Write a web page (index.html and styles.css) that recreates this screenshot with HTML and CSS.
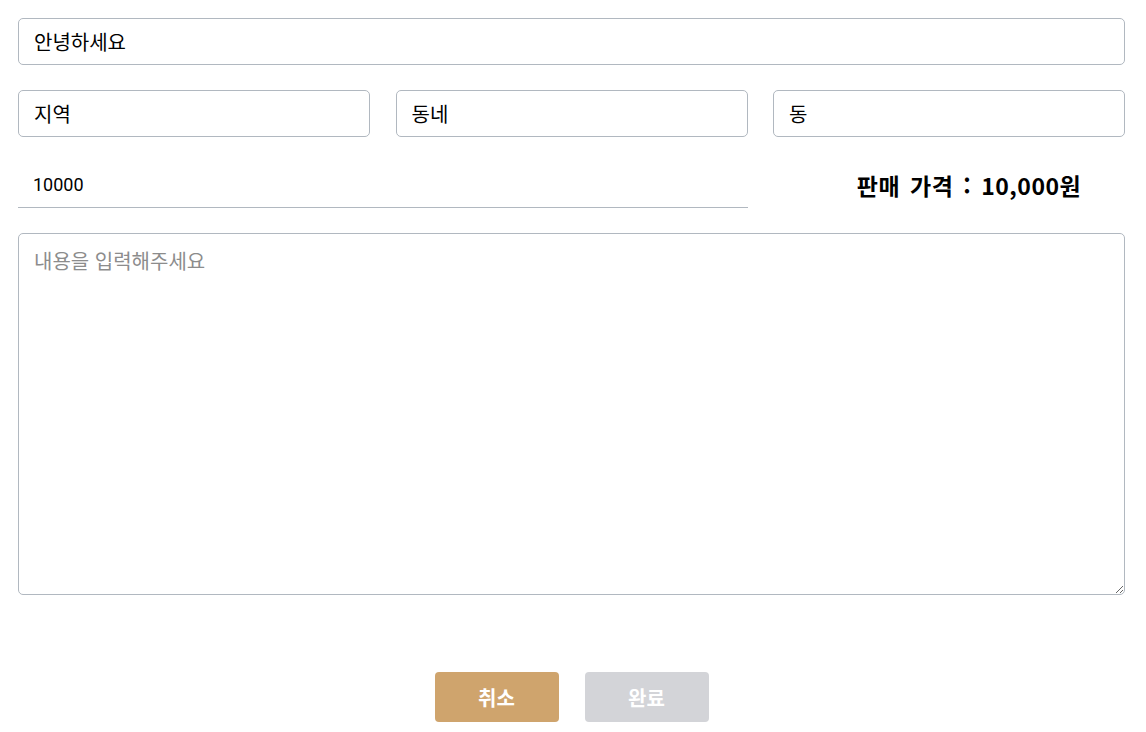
FILE: index.html
```html
<!DOCTYPE html>
<html lang="ko">
<head>
<meta charset="utf-8">
<title>글쓰기</title>
<link rel="stylesheet" href="styles.css">
</head>
<body>
<form class="write-form">
  <input class="field" type="text" value="안녕하세요">
  <div class="row-3">
    <input class="field" type="text" value="지역">
    <input class="field" type="text" value="동네">
    <input class="field" type="text" value="동">
  </div>
  <div class="row-3">
    <input class="field price-input" type="text" value="10000">
    <div class="price-label">판매 가격 : 10,000원</div>
  </div>
  <textarea class="field content" placeholder="내용을 입력해주세요"></textarea>
  <div class="actions">
    <button type="button" class="btn btn-cancel">취소</button>
    <button type="button" class="btn btn-done">완료</button>
  </div>
</form>
</body>
</html>
```

FILE: styles.css
```css
* { box-sizing: border-box; }
html, body { margin: 0; padding: 0; background: #fff; }
body {
  font-family: "Noto Sans CJK KR", "Noto Sans", sans-serif;
  color: #000;
}
.write-form {
  padding: 18px 21px 0 18px;
  display: flex;
  flex-direction: column;
  gap: 25px;
}
.field {
  display: block;
  width: 100%;
  height: 47px;
  border: 1px solid #b1b8c0;
  border-radius: 5px;
  padding: 0 15px;
  font-family: "Noto Sans CJK KR", "Noto Sans", sans-serif;
  font-size: 20px;
  color: #000;
  background: #fff;
  outline: none;
}
.row-3 {
  display: grid;
  grid-template-columns: repeat(3, 1fr);
  column-gap: 25.5px;
}
.price-input {
  grid-column: span 2;
  height: 46px;
  border: none;
  border-bottom: 1px solid #b1b8c0;
  border-radius: 0;
  font-family: Roboto, "Liberation Sans", sans-serif;
  font-size: 18px;
}
.price-label {
  display: flex;
  align-items: center;
  justify-content: center;
  padding-left: 40px;
  font-size: 23px;
  font-weight: 700;
  letter-spacing: 0.5px;
  word-spacing: 3px;
}
.content {
  height: 362px;
  padding: 12px 15px;
  resize: vertical;
}
.content::placeholder { color: #8c8c8c; }
.actions {
  display: flex;
  justify-content: center;
  gap: 26px;
  margin-top: 52px;
}
.btn {
  width: 124px;
  height: 50px;
  border: none;
  border-radius: 4px;
  color: #fff;
  font-family: "Noto Sans CJK KR", "Noto Sans", sans-serif;
  font-size: 20px;
  font-weight: 700;
  cursor: pointer;
}
.btn-cancel { background: #cfa46d; }
.btn-done { background: #d3d4d8; }
```
